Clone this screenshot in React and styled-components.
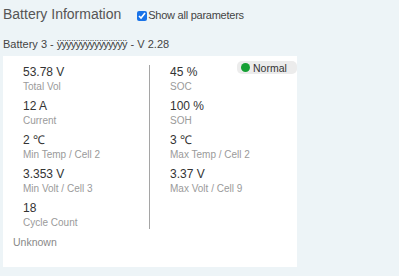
import React from 'react';
import styled, { createGlobalStyle } from 'styled-components';

const GlobalStyle = createGlobalStyle`
  html, body {
    margin: 0;
    padding: 0;
    background: #edf4f7;
  }
  body {
    font-family: "Liberation Sans", Arial, sans-serif;
  }
`;

// Page wrapper
const Page = styled.div`
  width: 399px;
  height: 276px;
  padding: 4px 0 0 3px;
  box-sizing: border-box;
  background: #edf4f7;
`;

const Header = styled.div`
  display: flex;
  align-items: center;
  height: 20px;
`;

const Title = styled.h1`
  margin: 0;
  font-size: 14px;
  line-height: 20px;
  font-weight: normal;
  color: #555;
`;

const CheckLabel = styled.label`
  display: flex;
  align-items: center;
  margin-left: 16px;
  font-size: 11px;
  letter-spacing: -0.25px;
  color: #444;
  padding-top: 2px;
`;

const Check = styled.input`
  width: 10px;
  height: 10px;
  margin: 2px 1px 0 0;
  accent-color: #1a73e8;
`;

const SubTitle = styled.div`
  margin-top: 13px;
  font-size: 11px;
  line-height: 14px;
  color: #444;
`;

const Garbled = styled.span`
  letter-spacing: -0.85px;
  margin-right: 1px;
`;

const Card = styled.div`
  position: relative;
  margin-top: 5px;
  width: 294px;
  height: 211px;
  box-sizing: border-box;
  padding: 9px 10px 0 10px;
  background: #fff;
`;

const Badge = styled.div`
  position: absolute;
  top: 5px;
  right: 0;
  width: 60px;
  height: 13px;
  display: flex;
  align-items: center;
  gap: 3px;
  padding-left: 4px;
  box-sizing: border-box;
  border-radius: 5px;
  background: #ececec;
  font-size: 10.5px;
  color: #333;
`;

const Dot = styled.span`
  width: 9px;
  height: 9px;
  border-radius: 50%;
  background: #16a035;
`;

const Grid = styled.div`
  display: grid;
  grid-template-columns: 136px 1fr;
`;

const Column = styled.div`
  display: flex;
  flex-direction: column;
  gap: 6px;
  padding-left: ${p => (p.$right ? '20px' : '10px')};
  border-left: ${p => (p.$right ? '1px solid #a5a5a5' : 'none')};
  margin-top: ${p => (p.$right ? '0' : '0')};
`;

const Item = styled.div`
  display: flex;
  flex-direction: column;
`;

const Value = styled.div`
  font-size: 12px;
  line-height: 15px;
  color: #333;
`;

const Label = styled.div`
  font-size: 10px;
  line-height: 13px;
  color: #9a9a9a;
`;

const Footer = styled.div`
  margin-top: 6px;
  font-size: 10.5px;
  line-height: 14px;
  color: #888;
`;

const left = [
  ['53.78 V', 'Total Vol'],
  ['12 A', 'Current'],
  ['2 ℃', 'Min Temp / Cell 2'],
  ['3.353 V', 'Min Volt / Cell 3'],
  ['18', 'Cycle Count'],
];

const right = [
  ['45 %', 'SOC'],
  ['100 %', 'SOH'],
  ['3 ℃', 'Max Temp / Cell 2'],
  ['3.37 V', 'Max Volt / Cell 9'],
];

const renderItems = list =>
  list.map(([v, l]) => (
    <Item key={l}>
      <Value>{v}</Value>
      <Label>{l}</Label>
    </Item>
  ));

const App = () => (
  <Page>
    <GlobalStyle />
    <Header>
      <Title>Battery Information</Title>
      <CheckLabel>
        <Check type="checkbox" defaultChecked />
        Show all parameters
      </CheckLabel>
    </Header>
    <SubTitle>
      Battery 3 - <Garbled>{'ÿ'.repeat(15)}</Garbled> - V 2.28
    </SubTitle>
    <Card>
      <Badge>
        <Dot />
        Normal
      </Badge>
      <Grid>
        <Column>{renderItems(left)}</Column>
        <Column $right>{renderItems(right)}</Column>
      </Grid>
      <Footer>Unknown</Footer>
    </Card>
  </Page>
);

export default App;
